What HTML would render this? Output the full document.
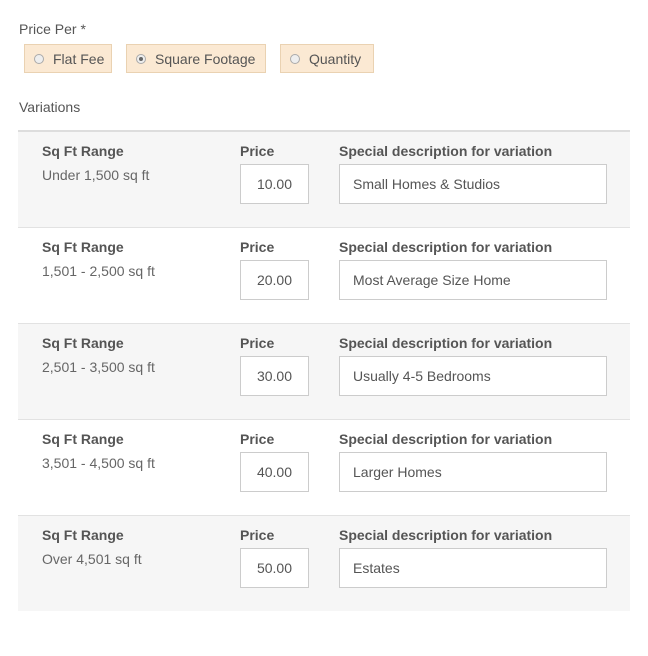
<!DOCTYPE html>
<html><head><style>
body{margin:0;background:#fff;font-family:"Liberation Sans",sans-serif;color:#555;width:648px;height:656px;position:relative;overflow:hidden}
.a{position:absolute}
.lbl{font-size:14px;color:#555}
.rb{position:absolute;top:44px;height:29px;background:#fbe9d3;border:1px solid #ead2b2;box-sizing:border-box;font-size:14px;color:#555;line-height:28px}
.rb i{position:absolute;left:9px;top:9px;width:10px;height:10px;border-radius:50%;border:1px solid #aaa;background:#eee;box-sizing:border-box}
.rb i.on::after{content:"";position:absolute;left:2px;top:2px;width:4px;height:4px;border-radius:50%;background:#666}
.rb span{position:absolute;left:28px}
.row{position:absolute;left:18px;width:612px;height:95px;border-bottom:1px solid #e2e2e2}
.g{background:#f6f6f6}
.h{position:absolute;top:11px;font-size:14px;font-weight:bold;color:#555}
.v{position:absolute;left:24px;top:35px;font-size:14px;color:#666}
.in{position:absolute;top:32px;height:40px;background:#fff;border:1px solid #ccc;box-sizing:border-box;font-size:14px;color:#555;line-height:38px}
</style></head><body>
<div class="a lbl" style="left:19px;top:21px">Price Per *</div>
<div class="rb" style="left:24px;width:88px"><i></i><span>Flat Fee</span></div>
<div class="rb" style="left:126px;width:140px"><i class="on"></i><span>Square Footage</span></div>
<div class="rb" style="left:280px;width:94px"><i></i><span>Quantity</span></div>
<div class="a lbl" style="left:19px;top:99px">Variations</div>
<div class="a" style="left:18px;top:130px;width:612px;height:2px;background:#ddd"></div>

<div class="row g" style="top:132px"><div class="h" style="left:24px">Sq Ft Range</div><div class="v">Under 1,500 sq ft</div><div class="h" style="left:222px">Price</div><div class="in" style="left:222px;width:69px;text-align:center">10.00</div><div class="h" style="left:321px">Special description for variation</div><div class="in" style="left:321px;width:268px;padding-left:13px">Small Homes &amp; Studios</div></div>
<div class="row" style="top:228px"><div class="h" style="left:24px">Sq Ft Range</div><div class="v">1,501 - 2,500 sq ft</div><div class="h" style="left:222px">Price</div><div class="in" style="left:222px;width:69px;text-align:center">20.00</div><div class="h" style="left:321px">Special description for variation</div><div class="in" style="left:321px;width:268px;padding-left:13px">Most Average Size Home</div></div>
<div class="row g" style="top:324px"><div class="h" style="left:24px">Sq Ft Range</div><div class="v">2,501 - 3,500 sq ft</div><div class="h" style="left:222px">Price</div><div class="in" style="left:222px;width:69px;text-align:center">30.00</div><div class="h" style="left:321px">Special description for variation</div><div class="in" style="left:321px;width:268px;padding-left:13px">Usually 4-5 Bedrooms</div></div>
<div class="row" style="top:420px"><div class="h" style="left:24px">Sq Ft Range</div><div class="v">3,501 - 4,500 sq ft</div><div class="h" style="left:222px">Price</div><div class="in" style="left:222px;width:69px;text-align:center">40.00</div><div class="h" style="left:321px">Special description for variation</div><div class="in" style="left:321px;width:268px;padding-left:13px">Larger Homes</div></div>
<div class="row g" style="top:516px;border-bottom:none"><div class="h" style="left:24px">Sq Ft Range</div><div class="v">Over 4,501 sq ft</div><div class="h" style="left:222px">Price</div><div class="in" style="left:222px;width:69px;text-align:center">50.00</div><div class="h" style="left:321px">Special description for variation</div><div class="in" style="left:321px;width:268px;padding-left:13px">Estates</div></div>
</body></html>
